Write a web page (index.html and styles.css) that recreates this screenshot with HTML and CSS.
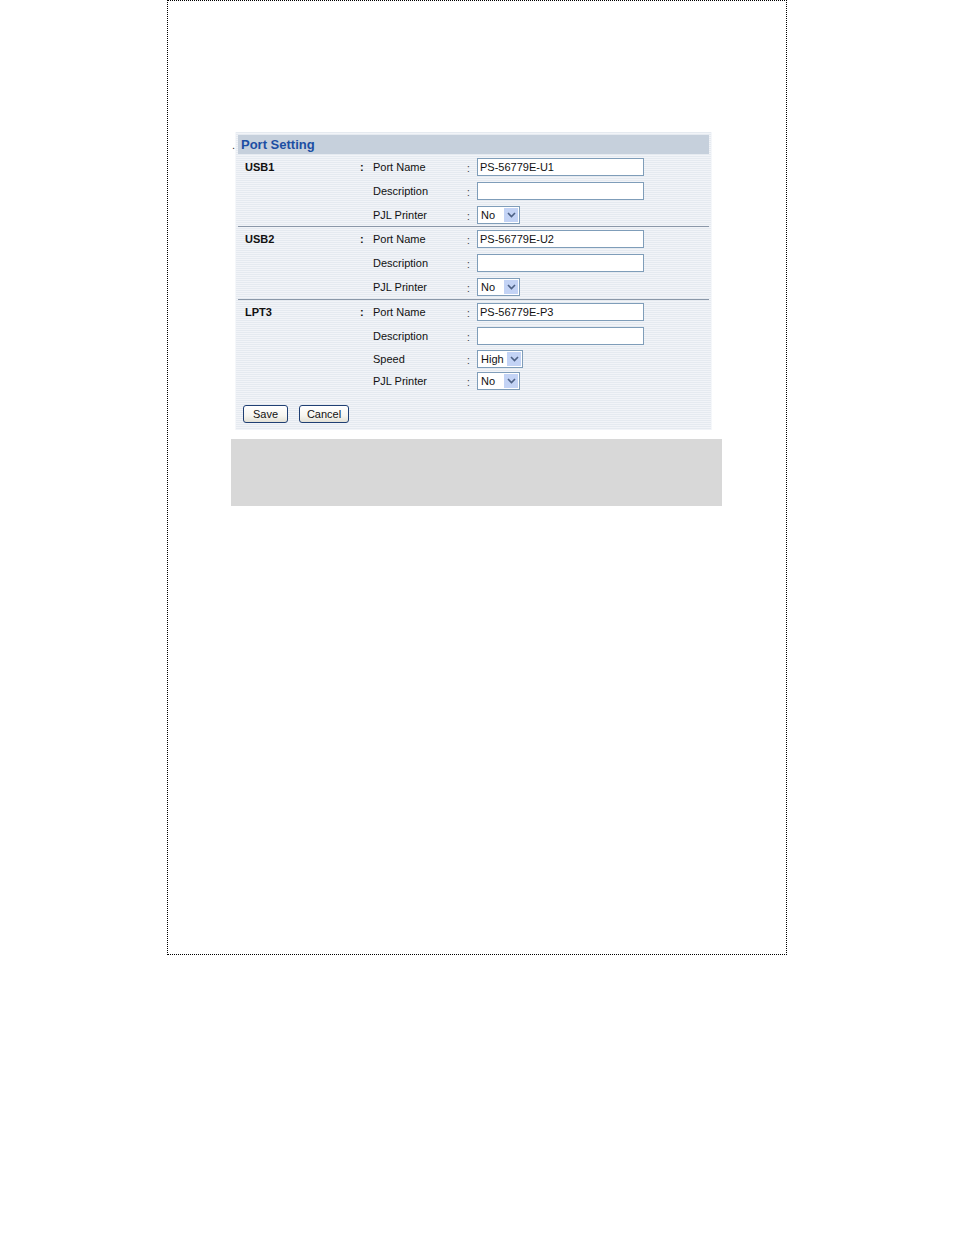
FILE: index.html
```html
<!DOCTYPE html>
<html>
<head>
<meta charset="utf-8">
<link rel="stylesheet" href="styles.css">
</head>
<body>
<div class="frame">
  <div class="panel">
    <div class="head"><span class="dot">.</span>Port Setting</div>
    <div class="group first">
      <div class="row"><span class="port">USB1</span><span class="c1">:</span><span class="lbl">Port Name</span><span class="c2">:</span><span class="txt">PS-56779E-U1</span></div>
      <div class="row"><span class="port"></span><span class="c1"></span><span class="lbl">Description</span><span class="c2">:</span><span class="txt"></span></div>
      <div class="row"><span class="port"></span><span class="c1"></span><span class="lbl">PJL Printer</span><span class="c2">:</span><span class="sel"><span class="val">No</span><span class="arr"><svg width="9" height="6" viewBox="0 0 9 6"><path d="M1 1 L4.5 4.5 L8 1" fill="none" stroke="#4d6185" stroke-width="1.6"/></svg></span></span></div>
    </div>
    <div class="group">
      <div class="row"><span class="port">USB2</span><span class="c1">:</span><span class="lbl">Port Name</span><span class="c2">:</span><span class="txt">PS-56779E-U2</span></div>
      <div class="row"><span class="port"></span><span class="c1"></span><span class="lbl">Description</span><span class="c2">:</span><span class="txt"></span></div>
      <div class="row"><span class="port"></span><span class="c1"></span><span class="lbl">PJL Printer</span><span class="c2">:</span><span class="sel"><span class="val">No</span><span class="arr"><svg width="9" height="6" viewBox="0 0 9 6"><path d="M1 1 L4.5 4.5 L8 1" fill="none" stroke="#4d6185" stroke-width="1.6"/></svg></span></span></div>
    </div>
    <div class="group last">
      <div class="row"><span class="port">LPT3</span><span class="c1">:</span><span class="lbl">Port Name</span><span class="c2">:</span><span class="txt">PS-56779E-P3</span></div>
      <div class="row"><span class="port"></span><span class="c1"></span><span class="lbl">Description</span><span class="c2">:</span><span class="txt"></span></div>
      <div class="row short"><span class="port"></span><span class="c1"></span><span class="lbl">Speed</span><span class="c2">:</span><span class="sel wide"><span class="val">High</span><span class="arr"><svg width="9" height="6" viewBox="0 0 9 6"><path d="M1 1 L4.5 4.5 L8 1" fill="none" stroke="#4d6185" stroke-width="1.6"/></svg></span></span></div>
      <div class="row short"><span class="port"></span><span class="c1"></span><span class="lbl">PJL Printer</span><span class="c2">:</span><span class="sel"><span class="val">No</span><span class="arr"><svg width="9" height="6" viewBox="0 0 9 6"><path d="M1 1 L4.5 4.5 L8 1" fill="none" stroke="#4d6185" stroke-width="1.6"/></svg></span></span></div>
    </div>
    <div class="buttons">
      <span class="btn save">Save</span>
      <span class="btn cancel">Cancel</span>
    </div>
  </div>
  <div class="graybox"></div>
</div>
</body>
</html>
```
FILE: styles.css
```css
body {
  margin: 0;
  background: #fff;
  font-family: "Liberation Sans", Arial, sans-serif;
}
.frame {
  margin-left: 167px;
  width: 620px;
  height: 955px;
  border: 1px dotted #000;
  padding-top: 131px;
  box-sizing: border-box;
}
.panel {
  margin-left: 67px;
  width: 477px;
  height: 298px;
  box-sizing: border-box;
  padding: 3px 2px 0 2px;
  background: repeating-linear-gradient(180deg, #e5eaf0 0px, #e5eaf0 1px, #f2f4f8 1px, #f2f4f8 2px);
  border-left: 1px solid #f5f7fa;
  border-right: 1px solid #f5f7fa;
}
.head {
  position: relative;
  height: 19px;
  background: #c6d0dc;
  color: #1c4ea3;
  font-size: 13px;
  font-weight: bold;
  line-height: 19px;
  padding-left: 3px;
}
.dot {
  position: absolute;
  left: -6px;
  top: 1px;
  color: #333;
  font-weight: normal;
  font-size: 11px;
}
.group {
  border-bottom: 1px solid #8a97a8;
}
.group.first {
  padding-top: 1px;
}
.group.last {
  border-bottom: none;
}
.row {
  display: flex;
  align-items: center;
  height: 24px;
  font-size: 11px;
  color: #111;
}
.group.first .row:last-child {
  height: 23px;
}
.row.short {
  height: 22px;
}
.port {
  width: 122px;
  padding-left: 7px;
  box-sizing: border-box;
  font-weight: bold;
  flex: none;
}
.c1 {
  width: 13px;
  flex: none;
  font-weight: bold;
}
.lbl {
  width: 94px;
  flex: none;
}
.c2 {
  width: 10px;
  flex: none;
  font-size: 10px;
  color: #333;
  padding-top: 3px;
}
.txt {
  width: 167px;
  height: 18px;
  box-sizing: border-box;
  border: 1px solid #7f9db9;
  background: #fff;
  line-height: 16px;
  padding-left: 2px;
  font-size: 11px;
  flex: none;
}
.sel {
  display: flex;
  width: 43px;
  height: 18px;
  box-sizing: border-box;
  border: 1px solid #7f9db9;
  background: #fff;
  flex: none;
  font-size: 11px;
}
.sel.wide {
  width: 46px;
}
.val {
  flex: 1;
  line-height: 16px;
  padding-left: 3px;
}
.arr {
  width: 14px;
  margin: 1px;
  background: #c3d3f5;
  display: flex;
  align-items: center;
  justify-content: center;
}
.buttons {
  display: flex;
  gap: 11px;
  padding-left: 5px;
  margin-top: 13px;
}
.btn {
  height: 18px;
  box-sizing: border-box;
  border: 1px solid #1f3f73;
  border-radius: 3px;
  background: linear-gradient(180deg, #ffffff 0%, #f6f5f0 60%, #e3e1d6 100%);
  font-size: 11px;
  line-height: 16px;
  text-align: center;
  color: #111;
}
.save { width: 45px; }
.cancel { width: 50px; }
.graybox {
  margin-left: 63px;
  margin-top: 9px;
  width: 491px;
  height: 67px;
  background: #d8d8d8;
}
```
